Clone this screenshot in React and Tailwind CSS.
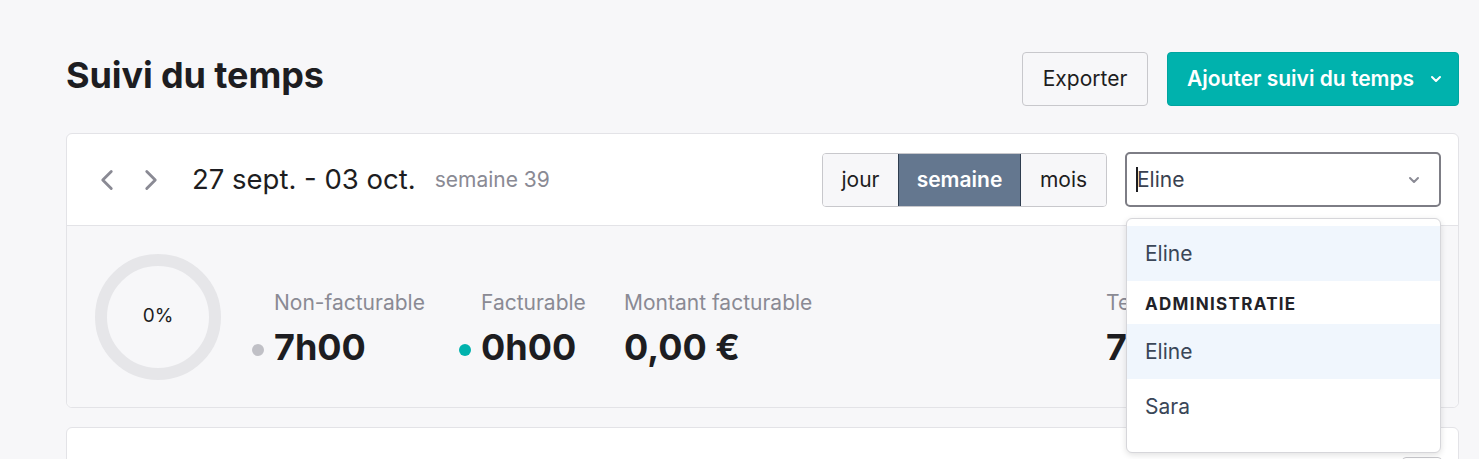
import { ChevronLeft, ChevronRight, ChevronDown } from 'lucide-react';

const font = { fontFamily: 'Inter, "Noto Sans", sans-serif' };

function Stat({ label, value, dot, width }) {
  return (
    <div className="flex flex-col shrink-0" style={{ width }}>
      <span className="text-[21px] leading-[26px] text-[#8a8a94] whitespace-nowrap">{label}</span>
      <div className="relative mt-[9px]">
        {dot && (
          <span className={`absolute -left-[22px] top-[19px] w-[12px] h-[12px] rounded-full ${dot}`} />
        )}
        <span className="text-[36px] leading-[44px] font-bold text-[#1d1d21] whitespace-nowrap">{value}</span>
      </div>
    </div>
  );
}

export default function App() {
  return (
    <div className="h-[459px] bg-[#f7f7f9] pl-[66px] pr-[20px] pt-[52px] overflow-hidden" style={font}>
      {/* Header */}
      <div className="flex items-center justify-between h-[54px]">
        <h1 className="text-[36px] font-bold text-[#1d1d21] tracking-[-0.1px] -mt-[8px]">Suivi du temps</h1>
        <div className="flex items-center gap-[19px]">
          <button className="h-[54px] w-[126px] rounded-[4px] border border-[#c8c8cc] bg-[#f7f7f9] text-[21px] text-[#1d1d21]">
            Exporter
          </button>
          <button className="h-[54px] w-[292px] pl-[19px] rounded-[4px] bg-[#00b2ad] border border-[#00a5a0] text-[21px] font-semibold text-white flex items-center gap-[14px]">
            Ajouter suivi du temps
            <ChevronDown size={16} strokeWidth={3} />
          </button>
        </div>
      </div>

      {/* Main card */}
      <div className="mt-[27px] border border-[#e3e3e7] rounded-[6px] bg-white">
        <div className="h-[92px] flex items-center pl-[23px] pr-[17px] border-b border-[#e3e3e7]">
          <div className="flex items-center gap-[10px] text-[#8a8a94]">
            <ChevronLeft size={34} strokeWidth={2} />
            <ChevronRight size={34} strokeWidth={2} />
          </div>
          <span className="ml-[24px] text-[27.5px] text-[#1d1d21]">27 sept. - 03 oct.</span>
          <span className="ml-[19px] text-[21px] text-[#8a8a94] mt-[1px]">semaine 39</span>

          <div className="ml-auto flex items-center">
            <div className="flex h-[54px] border border-[#c8c8cc] rounded-[4px] overflow-hidden text-[21px] text-[#1d1d21]">
              <span className="w-[75px] flex items-center justify-center bg-[#f7f7f9]">jour</span>
              <span className="w-[123px] flex items-center justify-center bg-[#64778f] text-white font-semibold border-x border-[#2f3d4f]">semaine</span>
              <span className="w-[85px] flex items-center justify-center bg-[#f7f7f9]">mois</span>
            </div>

            <div className="relative ml-[18px]">
              <div className="w-[316px] h-[55px] border-2 border-[#7d7d85] rounded-[5px] bg-white flex items-center pl-[9px] pr-[17px]">
                <span className="w-[2px] h-[25px] bg-[#1d1d21]" />
                <span className="text-[21px] text-[#3a4150] -ml-[1px]">Eline</span>
                <ChevronDown size={16} strokeWidth={3} className="ml-auto text-[#8a8a94]" />
              </div>

              {/* Dropdown menu */}
              <div className="absolute left-[1px] top-[66px] w-[315px] z-10 bg-white border border-[#d6d6da] rounded-[6px] shadow-[0_2px_6px_rgba(0,0,0,0.12)] pt-[7px] pb-[18px]">
                <div className="h-[55px] flex items-center px-[18px] bg-[#f0f6fd] text-[21px] text-[#3a4658]">Eline</div>
                <div className="h-[43px] flex items-end pb-[7px] px-[18px] text-[17px] font-bold tracking-[1.3px] text-[#222228]">ADMINISTRATIE</div>
                <div className="h-[55px] flex items-center px-[18px] bg-[#f0f6fd] text-[21px] text-[#3a4658]">Eline</div>
                <div className="h-[55px] flex items-center px-[18px] text-[21px] text-[#3a4658]">Sara</div>
              </div>
            </div>
          </div>
        </div>

        {/* Stats */}
        <div className="h-[181px] bg-[#f7f7f9] rounded-b-[6px] flex items-center pl-[28px]">
          <div className="w-[126px] h-[126px] rounded-full border-[12px] border-[#e6e6e9] flex items-center justify-center">
            <span className="text-[19px] text-[#1d1d21]">0%</span>
          </div>
          <div className="ml-[53px] flex items-start self-start pt-[64px]">
            <Stat label="Non-facturable" value="7h00" dot="bg-[#c0c0c6]" width="207px" />
            <Stat label="Facturable" value="0h00" dot="bg-[#00b2ad]" width="143px" />
            <Stat label="Montant facturable" value="0,00 €" width="482px" />
            <Stat label="Temps total" value="7h00" width="200px" />
          </div>
        </div>
      </div>

      {/* Second card */}
      <div className="mt-[19px] h-[60px] border border-[#e3e3e7] rounded-[6px] bg-white relative">
        <div className="absolute right-[16px] top-[29px] w-[40px] h-[30px] border border-[#c8c8cc] rounded-[4px]" />
      </div>
    </div>
  );
}
